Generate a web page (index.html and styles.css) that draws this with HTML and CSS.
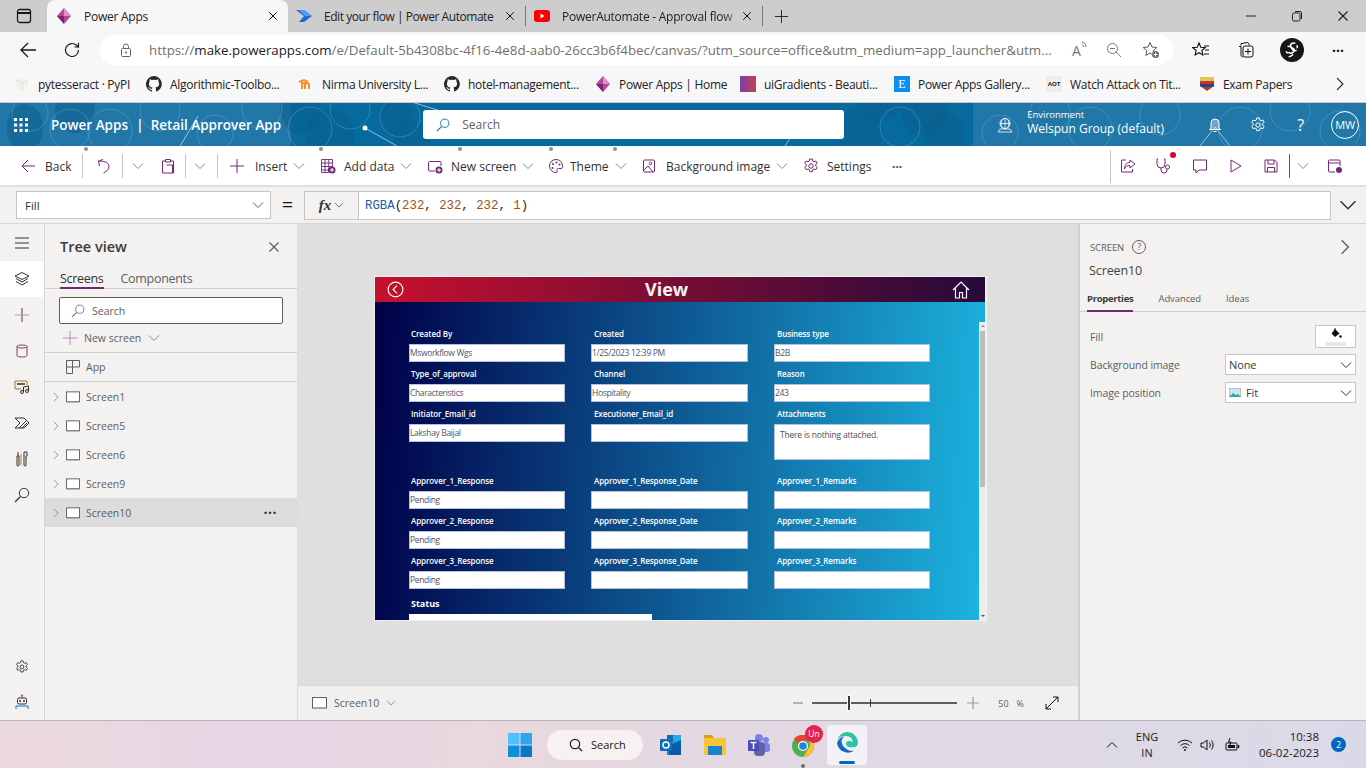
FILE: index.html
```html
<!DOCTYPE html>
<html lang="en">
<head>
<meta charset="utf-8">
<title>Power Apps</title>
<link rel="stylesheet" href="styles.css">
</head>
<body>
<svg class="defs" width="0" height="0" aria-hidden="true">
  <defs>
    <symbol id="chev" viewBox="0 0 12 12"><path d="M1 3.500l5 5 5-5" fill="none" stroke="currentColor" stroke-width="1"/></symbol>
    <symbol id="chevr" viewBox="0 0 12 12"><path d="M3.500 1l5 5-5 5" fill="none" stroke="currentColor" stroke-width="1"/></symbol>
    <symbol id="x" viewBox="0 0 12 12"><path d="M1.500 1.500l9 9M10.500 1.500l-9 9" fill="none" stroke="currentColor" stroke-width="1.200"/></symbol>
    <symbol id="pa" viewBox="0 0 16 16"><path d="M8 0l7 8-7 8-7-8z" fill="#b6479c"/><path d="M8 0l7 8-7 0z" fill="#e58dcb"/><path d="M1 8l7 8V8z" fill="#742774"/></symbol>
    <symbol id="gh" viewBox="0 0 16 16"><path fill="#24292f" d="M8 0a8 8 0 0 0-2.500 15.600c.4.100.5-.2.5-.4v-1.400c-2.200.5-2.700-1-2.700-1-.4-.9-.9-1.200-.9-1.200-.7-.5.100-.5.100-.5.800.1 1.200.8 1.200.8.700 1.200 1.900.9 2.300.7.100-.5.300-.9.500-1.100-1.800-.2-3.600-.9-3.600-4 0-.9.300-1.600.8-2.100-.1-.2-.4-1 .1-2.100 0 0 .7-.2 2.200.8a7.600 7.600 0 0 1 4 0c1.500-1 2.200-.8 2.200-.8.400 1.100.200 1.900.1 2.100.5.600.8 1.300.8 2.100 0 3.100-1.900 3.700-3.700 3.900.3.300.600.800.600 1.500v2.200c0 .2.100.5.600.4A8 8 0 0 0 8 0z"/></symbol>
    <symbol id="gear" viewBox="0 0 16 16"><path d="M6.700 1h2.600l.4 2 1.300.7 1.900-.7 1.300 2.300-1.500 1.300v1.500l1.500 1.300-1.300 2.300-1.900-.7-1.300.7-.4 2H6.700l-.4-2-1.300-.7-1.900.7-1.300-2.300 1.500-1.300V6.600L1.800 5.300 3.100 3l1.900.7 1.300-.7z" fill="none" stroke="currentColor"/><circle cx="8" cy="8" r="2.200" fill="none" stroke="currentColor"/></symbol>
    <symbol id="scr" viewBox="0 0 15 12"><rect x=".5" y=".5" width="14" height="10.500" fill="#fff" stroke="#605e5c"/><path d="M.5 11.500h14" stroke="#a19f9d"/></symbol>
    <symbol id="loupe" viewBox="0 0 16 16"><circle cx="10" cy="6" r="4.700" fill="none" stroke="currentColor"/><path d="M6.500 9.500L1 15" stroke="currentColor" stroke-width="1.200"/></symbol>
    <symbol id="plus" viewBox="0 0 16 16"><path d="M8 1v14M1 8h14" stroke="currentColor" stroke-width="1"/></symbol>
  </defs>
</svg>

<div class="screen">
  <!-- Browser tab strip -->
  <div class="tabs">
    <span class="tab-side"><svg class="i16" viewBox="0 0 16 16"><rect x="1.500" y="1.500" width="13" height="13" rx="2" fill="none" stroke="#1a1a1a" stroke-width="1.300"/><path d="M1.500 5h13" stroke="#1a1a1a" stroke-width="2"/></svg></span>
    <div class="tab tab-on"><svg class="i16"><use href="#pa"/></svg><span class="tab-t">Power Apps</span><svg class="i10"><use href="#x"/></svg></div>
    <div class="tab tab-2"><svg class="i16" viewBox="0 0 16 16"><path d="M0 2h8l8 6-8 6H3l5-6z" fill="#2566d6"/><path d="M3 2h5l8 6H9z" fill="#4aa0f0"/></svg><span class="tab-t">Edit your flow | Power Automate</span><svg class="i10"><use href="#x"/></svg></div>
    <i class="tab-sep"></i>
    <div class="tab tab-3"><svg class="i16" viewBox="0 0 16 16"><rect y="2" width="16" height="12" rx="3" fill="#f00"/><path d="M6.500 5.500v5l4-2.500z" fill="#fff"/></svg><span class="tab-t fade">PowerAutomate - Approval flow</span><svg class="i10"><use href="#x"/></svg></div>
    <i class="tab-sep"></i>
    <svg class="new-tab"><use href="#plus"/></svg>
    <div class="win">
      <svg class="i12" viewBox="0 0 12 12"><path d="M1 6h10" stroke="#222"/></svg>
      <svg class="i12" viewBox="0 0 12 12"><rect x="1.500" y="3" width="7.500" height="8" rx="1.500" fill="none" stroke="#222"/><path d="M4 1.500h5A1.500 1.500 0 0 1 10.500 3v6" fill="none" stroke="#222"/></svg>
      <svg class="i12"><use href="#x"/></svg>
    </div>
  </div>

  <!-- Address bar -->
  <div class="addr">
    <svg class="addr-back" viewBox="0 0 18 18"><path d="M17 9H2M9 2L2 9l7 7" fill="none" stroke="#1a1a1a" stroke-width="1.300"/></svg>
    <svg class="addr-re" viewBox="0 0 18 18"><path d="M15.500 9a6.500 6.500 0 1 1-2-4.700L15.500 6V1.800M15.500 6h-4" fill="none" stroke="#1a1a1a" stroke-width="1.200"/></svg>
    <div class="url">
      <svg class="i14 lock" viewBox="0 0 14 14"><rect x="2.500" y="5.500" width="9" height="8" rx="1" fill="none" stroke="#666"/><path d="M4.500 5.500V3.500a2.500 2.500 0 0 1 5 0v2" fill="none" stroke="#666"/><circle cx="7" cy="9.500" r="1" fill="#666"/></svg>
      <span class="url-t"><span class="dim">https://</span>make.powerapps.com<span class="dim">/e/Default-5b4308bc-4f16-4e8d-aab0-26cc3b6f4bec/canvas/?utm_source=office&amp;utm_medium=app_launcher&amp;utm...</span></span>
      <span class="url-a">A<svg class="i8" viewBox="0 0 8 8"><path d="M1 1a5 5 0 0 1 4 5M1 3.500a3 3 0 0 1 2 2.500" fill="none" stroke="#777"/></svg></span>
      <svg class="i16 url-z" viewBox="0 0 16 16"><circle cx="6.500" cy="6.500" r="5" fill="none" stroke="#777"/><path d="M10 10l5 5M4 6.500h5" stroke="#777"/></svg>
      <svg class="i18 url-s" viewBox="0 0 18 18"><path d="M8 1.500l2 4.500 4.800.5-3.600 3.200 1 4.800L8 12l-4.200 2.500 1-4.800L1.200 6.500 6 6z" fill="none" stroke="#555"/><circle cx="13.500" cy="13.500" r="3.500" fill="#6b6b6b"/><path d="M13.500 11.500v4M11.500 13.500h4" stroke="#fff"/></svg>
    </div>
    <svg class="i18 ad-a" viewBox="0 0 18 18"><path d="M7 2l1.800 4.200 4.400.4-3.300 2.900 1 4.500L7 11.700l-3.900 2.300 1-4.500L.8 6.600l4.400-.4z" fill="none" stroke="#111" stroke-width="1.100"/><path d="M12 5h5M13 9h4M12 13h5" stroke="#111"/></svg>
    <svg class="i18 ad-b" viewBox="0 0 18 18"><path d="M4 4.500V2.700L10 1.500c1.500 0 2 1 2 2v1M2 5.500h2v8.500c0 1 1 2 2 2" fill="none" stroke="#111"/><rect x="6" y="5" width="10" height="11" rx="2" fill="none" stroke="#111"/><path d="M11 7.500v6M8 10.500h6" stroke="#111"/></svg>
    <span class="avatar"><svg class="i18" viewBox="0 0 16 16"><path d="M11 2C8 1 6 3 7 5s3 1 3 3-3 4-5 2M4 5c2-1 3 0 4 2s3 2 4 1M5 14c2 0 3-1 4-2M12 6c1 0 1-2 0-2M3 9c0 1 1 2 2 1" fill="none" stroke="#fff" stroke-width="1.400"/></svg></span>
    <span class="ad-more">···</span>
  </div>

  <!-- Favourites -->
  <div class="favs">
    <div class="fav"><svg class="i16" viewBox="0 0 16 16"><path d="M8 1l6 3v8l-6 3-6-3V4z" fill="#f3f1ea"/><path d="M2 4l6 3 6-3M8 7v8" stroke="#e3e1da" fill="none"/></svg><span>pytesseract · PyPI</span></div>
    <div class="fav"><svg class="i16"><use href="#gh"/></svg><span>Algorithmic-Toolbo...</span></div>
    <div class="fav"><svg class="i16" viewBox="0 0 16 16"><path d="M4 13V7l3 0v6M7 8c0-1 4-1 4 0v5M1 6l5-2 4 2" fill="none" stroke="#f39325" stroke-width="2"/></svg><span>Nirma University L...</span></div>
    <div class="fav"><svg class="i16"><use href="#gh"/></svg><span>hotel-management...</span></div>
    <div class="fav"><svg class="i16"><use href="#pa"/></svg><span>Power Apps | Home</span></div>
    <div class="fav"><span class="ug"></span><span>uiGradients - Beauti...</span></div>
    <div class="fav"><span class="gal">E</span><span>Power Apps Gallery...</span></div>
    <div class="fav"><span class="aot">AOT</span><span>Watch Attack on Tit...</span></div>
    <div class="fav"><svg class="i16" viewBox="0 0 16 16"><path d="M1 1h14v9l-7 5-7-5z" fill="#c0392b"/><path d="M1 1h14v4H1z" fill="#e8c34a"/><path d="M1 8h14v2l-1 1H2l-1-1z" fill="#2a3f8f"/></svg><span>Exam Papers</span></div>
    <svg class="fav-more"><use href="#chevr"/></svg>
  </div>

  <!-- Power Apps header -->
  <header class="pa-head">
    <svg class="pa-art" viewBox="0 0 1366 43" preserveAspectRatio="none" aria-hidden="true">
      <g fill="#0a5d8c" fill-opacity=".5">
        <ellipse cx="25" cy="25" rx="18" ry="24"/><ellipse cx="75" cy="8" rx="20" ry="22"/><ellipse cx="300" cy="5" rx="20" ry="26"/><ellipse cx="330" cy="32" rx="24" ry="26"/><ellipse cx="395" cy="10" rx="16" ry="24"/><ellipse cx="412" cy="38" rx="18" ry="20"/>
        <ellipse cx="860" cy="32" rx="22" ry="28"/><ellipse cx="925" cy="8" rx="24" ry="26"/><ellipse cx="880" cy="-2" rx="24" ry="20"/><ellipse cx="945" cy="34" rx="20" ry="24"/>
      </g>
      <g fill="none" stroke="#6fb2d3" stroke-opacity=".4">
        <circle cx="30" cy="10" r="18"/><circle cx="70" cy="26" r="20"/><circle cx="110" cy="28" r="22"/><circle cx="160" cy="8" r="20"/><circle cx="215" cy="30" r="18"/><circle cx="262" cy="6" r="20"/><circle cx="310" cy="26" r="22"/><circle cx="350" cy="6" r="20"/><circle cx="400" cy="14" r="20"/>
        <circle cx="900" cy="24" r="20"/><circle cx="1000" cy="30" r="18"/><circle cx="1050" cy="10" r="20"/><circle cx="1090" cy="26" r="22"/><circle cx="1160" cy="12" r="20"/><circle cx="1240" cy="26" r="22"/><circle cx="1290" cy="8" r="20"/><circle cx="1340" cy="28" r="20"/>
      </g>
      <path d="M365 25l32 18M415 0l32 10M1200 43l15-19 15 19M785 43l8-12M180 43l18-30" fill="none" stroke="#cfe3ee" stroke-opacity=".7"/>
      <circle cx="365" cy="25" r="2.500" fill="#fff"/><circle cx="793" cy="31" r="2" fill="#dfeef6"/>
    </svg>
    <svg class="waffle" viewBox="0 0 14 14"><g fill="#fff"><rect width="3" height="3"/><rect x="5.500" width="3" height="3"/><rect x="11" width="3" height="3"/><rect y="5.500" width="3" height="3"/><rect x="5.500" y="5.500" width="3" height="3"/><rect x="11" y="5.500" width="3" height="3"/><rect y="11" width="3" height="3"/><rect x="5.500" y="11" width="3" height="3"/><rect x="11" y="11" width="3" height="3"/></g></svg>
    <span class="brand">Power Apps</span><span class="brand-sep">|</span><span class="brand">Retail Approver App</span>
    <div class="head-search"><svg class="i14 loupe-b"><use href="#loupe"/></svg><span>Search</span></div>
    <svg class="i16 env-i" viewBox="0 0 16 16"><circle cx="8" cy="6.500" r="5" fill="none" stroke="#fff"/><path d="M3 6.500h10M8 1.500v10M5 2.500c-1 3-1 5 0 8M11 2.500c1 3 1 5 0 8M1 15l2-3h10l2 3z" fill="none" stroke="#fff" stroke-width=".8"/></svg>
    <div class="env"><small>Environment</small><b>Welspun Group (default)</b></div>
    <svg class="i16 hd-bell" viewBox="0 0 16 16"><path d="M4 11V6a4 4 0 0 1 8 0v5l1.500 1.500h-11zM6.500 14.500h3" fill="#fff" fill-opacity=".35" stroke="#fff"/></svg>
    <svg class="i16 hd-gear"><use href="#gear"/></svg>
    <span class="hd-q">?</span>
    <span class="mw">MW</span>
  </header>

  <!-- Command bar -->
  <nav class="cmd">
    <svg class="cmd-dots" viewBox="0 0 640 4" aria-hidden="true"><g fill="#8f8f8f"><circle cx="86" cy="2" r="2"/><circle cx="321" cy="2" r="2"/><circle cx="460" cy="2" r="2"/><circle cx="551" cy="2" r="2"/><circle cx="615" cy="2" r="2"/></g></svg>
    <div class="c"><svg class="i14" viewBox="0 0 14 14"><path d="M14 7H1M7 1L1 7l6 6" fill="none" stroke="currentColor"/></svg><span class="c-back">Back</span></div>
    <i class="c-sep"></i>
    <div class="c"><svg class="i16" viewBox="0 0 16 16"><path d="M7 1.500L2.500 3l1 5M2.500 3C6 3 13 3.500 13 8.500c0 3.500-3 5-5.500 6.500" fill="none" stroke="currentColor"/></svg></div>
    <i class="c-sep"></i>
    <div class="c c-g"><svg class="i12"><use href="#chev"/></svg></div>
    <div class="c"><svg class="i16" viewBox="0 0 16 16"><path d="M5 3H2.500v12h11V3H11M5.500 1.500h5V4h-5zM6.500 7h6v8" fill="none" stroke="currentColor"/></svg></div>
    <i class="c-sep"></i>
    <div class="c c-g"><svg class="i12"><use href="#chev"/></svg></div>
    <i class="c-sep"></i>
    <div class="c"><svg class="i16"><use href="#plus"/></svg><span class="ct ct-i">Insert</span><svg class="i12 c-g"><use href="#chev"/></svg></div>
    <div class="c"><svg class="i16" viewBox="0 0 16 16"><path d="M1.500 1.500h11v9h-4v4h-7zM1.500 5h11M1.500 8.500h11M1.500 12h7M5 1.500v13M8.800 1.500v13" fill="none" stroke="currentColor" stroke-width=".9"/><circle cx="12" cy="12" r="3.500" fill="currentColor"/><path d="M12 10v4M10 12h4" stroke="#fff"/></svg><span class="ct ct-a">Add data</span><svg class="i12 c-g"><use href="#chev"/></svg></div>
    <div class="c"><svg class="i16" viewBox="0 0 16 16"><path d="M8 13H2.500a1 1 0 0 1-1-1V4.500a1 1 0 0 1 1-1H13a1 1 0 0 1 1 1V8" fill="none" stroke="currentColor"/><circle cx="12" cy="12" r="3.500" fill="currentColor"/><path d="M12 10v4M10 12h4" stroke="#fff"/></svg><span class="ct ct-n">New screen</span><svg class="i12 c-g"><use href="#chev"/></svg></div>
    <div class="c"><svg class="i16" viewBox="0 0 16 16"><path d="M8 1.500a6.500 6.500 0 1 0 0 13c1.500 0 1.500-1 1-2s0-2 1.500-2H13c1.500 0 2-1 1.500-3A6.500 6.500 0 0 0 8 1.500z" fill="none" stroke="currentColor"/><circle cx="5" cy="6" r="1" fill="currentColor"/><circle cx="8.500" cy="4.500" r="1" fill="currentColor"/><circle cx="4.500" cy="10" r="1" fill="currentColor"/><circle cx="11.500" cy="6.500" r="1" fill="currentColor"/></svg><span class="ct ct-t">Theme</span><svg class="i12 c-g"><use href="#chev"/></svg></div>
    <div class="c"><svg class="i14" viewBox="0 0 14 14"><rect x="1.500" y="1" width="11" height="12" rx="1" fill="none" stroke="currentColor"/><circle cx="8.500" cy="4.500" r="1.200" fill="none" stroke="currentColor"/><path d="M2 11l4-4 5 6" fill="none" stroke="currentColor"/></svg><span class="ct ct-b">Background image</span><svg class="i12 c-g"><use href="#chev"/></svg></div>
    <div class="c"><svg class="i16"><use href="#gear"/></svg><span class="ct ct-s">Settings</span></div>
    <div class="c c-more">···</div>
    <i class="c-sep c-sep-t"></i>
    <div class="c"><svg class="i16" viewBox="0 0 16 16"><path d="M6 2H1.500v12h11v-3" fill="none" stroke="currentColor"/><path d="M10 2l5 4-5 4V7.500C7 7.500 5 9 4.500 11c0-4 2-6.500 5.500-6.500z" fill="none" stroke="currentColor"/></svg></div>
    <div class="c c-st"><svg class="i18" viewBox="0 0 18 18"><path d="M3 2H2v5a4 4 0 0 0 8 0V2H9M6 11v2a3 3 0 0 0 6 0v-1" fill="none" stroke="currentColor"/><circle cx="12.500" cy="10" r="2" fill="none" stroke="currentColor"/></svg><i class="dot"></i></div>
    <div class="c"><svg class="i16" viewBox="0 0 16 16"><path d="M1.500 2h13v10H7l-3 3v-3H1.500z" fill="none" stroke="currentColor"/></svg></div>
    <div class="c"><svg class="i14" viewBox="0 0 14 14"><path d="M2 1l10 6-10 6z" fill="none" stroke="currentColor"/></svg></div>
    <div class="c"><svg class="i14" viewBox="0 0 14 14"><path d="M1 1h9.500L13 3.500V13H1zM4 1v4h6V1M3.500 13V8.500h7V13" fill="none" stroke="currentColor"/></svg></div>
    <i class="c-sep c-sep-d"></i>
    <div class="c c-g"><svg class="i12"><use href="#chev"/></svg></div>
    <div class="c"><svg class="i16" viewBox="0 0 16 16"><path d="M8 14H2.500a1 1 0 0 1-1-1V3a1 1 0 0 1 1-1H12a1 1 0 0 1 1 1v5M1.500 5H13" fill="none" stroke="currentColor"/><circle cx="12" cy="12" r="3" fill="currentColor"/></svg></div>
  </nav>

  <!-- Formula bar -->
  <div class="fx-bar">
    <div class="prop">Fill<svg class="i12"><use href="#chev"/></svg></div>
    <span class="eq">=</span>
    <div class="fx-btn"><i>fx</i><svg class="i10"><use href="#chev"/></svg></div>
    <div class="fx-in"><span class="k">RGBA</span>(<span class="n">232</span>, <span class="n">232</span>, <span class="n">232</span>, <span class="n">1</span>)</div>
    <svg class="fx-exp"><use href="#chev"/></svg>
  </div>

  <!-- Studio -->
  <div class="studio">
    <aside class="rail">
      <svg class="i16 r-i r-h" viewBox="0 0 16 16"><path d="M1 3h14M1 8h14M1 13h14" stroke="#323130"/></svg>
      <div class="r-on"><svg class="i16" viewBox="0 0 16 16"><path d="M8 1.500L15 5 8 8.500 1 5zM2 7.500L8 11l6-3.500M2 10.500L8 14l6-3.500" fill="none" stroke="#323130"/></svg></div>
      <svg class="i16 r-i r-p" viewBox="0 0 16 16"><path d="M8 1v14" stroke="#742774"/><path d="M1 8h14" stroke="#a19f9d"/></svg>
      <svg class="i16 r-i r-d" viewBox="0 0 16 16"><path d="M3 3.500C3 1.500 13 1.500 13 3.500v9c0 2-10 2-10 0zM3 3.500c0 2 10 2 10 0" fill="none" stroke="#8a3a6a"/></svg>
      <svg class="i16 r-i" viewBox="0 0 16 16"><path d="M7 10H1V2h12v4" fill="none" stroke="#b4731f"/><path d="M3 4h8v2H3z" fill="#605e5c"/><circle cx="8" cy="13" r="1.500" fill="none" stroke="#323130"/><circle cx="13" cy="12" r="1.500" fill="none" stroke="#323130"/><path d="M9.500 13V8l5-1v5" fill="none" stroke="#323130"/></svg>
      <svg class="i16 r-i" viewBox="0 0 16 16"><path d="M1 3h9l5 5-5 5H1l5-5zM5 13l7-7M8 13l5-5" fill="none" stroke="#323130"/></svg>
      <svg class="i16 r-i" viewBox="0 0 16 16"><path d="M4 1v4M3 5h2v9a1 1 0 0 1-2 0zM10 1h3v4h-1v9a1 1 0 0 1-2 0V5z" fill="none" stroke="#323130"/><path d="M7 3v11" stroke="#c97a1a"/></svg>
      <svg class="i16 r-i r-s"><use href="#loupe"/></svg>
      <span class="r-fill"></span>
      <svg class="i14 r-g"><use href="#gear"/></svg>
      <svg class="i16 r-b" viewBox="0 0 16 16"><rect x="3.500" y="4" width="9" height="6" rx="1.500" fill="none" stroke="#323130"/><path d="M8 1.500V4M2 15v-3h12v3" fill="none" stroke="#0078d4"/><circle cx="6" cy="7" r="1" fill="#323130"/><circle cx="10" cy="7" r="1" fill="#323130"/><circle cx="8" cy="1.500" r="1" fill="#d13438"/></svg>
    </aside>

    <section class="tree">
      <div class="tree-top"><h2>Tree view</h2><svg class="i12"><use href="#x"/></svg></div>
      <div class="tree-tabs"><span class="on">Screens</span><span>Components</span></div>
      <div class="tree-search"><svg class="i14"><use href="#loupe"/></svg><span>Search</span></div>
      <div class="tree-new"><svg class="i16"><use href="#plus"/></svg><span>New screen</span><svg class="i12"><use href="#chev"/></svg></div>
      <div class="tree-app"><svg class="i14" viewBox="0 0 14 14"><path d="M.5.500h13v6.500h-7v6.500h-6zM6.500.500V7H.5" fill="none" stroke="#605e5c"/></svg><span>App</span></div>
      <div class="row"><svg class="i10 rc"><use href="#chevr"/></svg><svg class="scr"><use href="#scr"/></svg><span>Screen1</span></div>
      <div class="row"><svg class="i10 rc"><use href="#chevr"/></svg><svg class="scr"><use href="#scr"/></svg><span>Screen5</span></div>
      <div class="row"><svg class="i10 rc"><use href="#chevr"/></svg><svg class="scr"><use href="#scr"/></svg><span>Screen6</span></div>
      <div class="row"><svg class="i10 rc"><use href="#chevr"/></svg><svg class="scr"><use href="#scr"/></svg><span>Screen9</span></div>
      <div class="row row-on"><svg class="i10 rc"><use href="#chevr"/></svg><svg class="scr"><use href="#scr"/></svg><span>Screen10</span><em>···</em></div>
    </section>

    <main class="stage">
      <div class="stage-area">
        <div class="canvas">
          <div class="app-head">
            <svg class="back-i" viewBox="0 0 18 18"><circle cx="9" cy="9" r="7.800" fill="none" stroke="#fff" stroke-width="1.200"/><path d="M10.500 5L6.500 9l4 4" fill="none" stroke="#fff" stroke-width="1.200"/></svg>
            <span class="app-title">View</span>
            <svg class="home-i" viewBox="0 0 18 18"><path d="M1 9l8-8 8 8M3.500 7.500V17h4v-5.500h3V17h4V7.500" fill="none" stroke="#fff" stroke-width="1.200"/></svg>
          </div>
          <div class="app-body">
            <div class="form">
              <div class="f"><label>Created By</label><div class="in">Msworkflow Wgs</div></div>
              <div class="f"><label>Created</label><div class="in">1/25/2023 12:39 PM</div></div>
              <div class="f"><label>Business type</label><div class="in">B2B</div></div>
              <div class="f"><label>Type_of_approval</label><div class="in">Characteristics</div></div>
              <div class="f"><label>Channel</label><div class="in">Hospitality</div></div>
              <div class="f"><label>Reason</label><div class="in">243</div></div>
              <div class="f"><label>Initiator_Email_id</label><div class="in">Lakshay Baijal</div></div>
              <div class="f"><label>Executioner_Email_id</label><div class="in"></div></div>
              <div class="f"><label>Attachments</label><div class="in in-att">There is nothing attached.</div></div>
            </div>
            <div class="form">
              <div class="f"><label>Approver_1_Response</label><div class="in">Pending</div></div>
              <div class="f"><label>Approver_1_Response_Date</label><div class="in"></div></div>
              <div class="f"><label>Approver_1_Remarks</label><div class="in"></div></div>
              <div class="f"><label>Approver_2_Response</label><div class="in">Pending</div></div>
              <div class="f"><label>Approver_2_Response_Date</label><div class="in"></div></div>
              <div class="f"><label>Approver_2_Remarks</label><div class="in"></div></div>
              <div class="f"><label>Approver_3_Response</label><div class="in">Pending</div></div>
              <div class="f"><label>Approver_3_Response_Date</label><div class="in"></div></div>
              <div class="f"><label>Approver_3_Remarks</label><div class="in"></div></div>
            </div>
            <div class="status-t">Status</div>
            <div class="status-b"></div>
            <div class="sbar"><span class="sb-up"></span><span class="sb-th"></span><span class="sb-dn"></span></div>
          </div>
        </div>
      </div>
      <div class="stage-foot">
        <svg class="scr"><use href="#scr"/></svg><span class="sf-n">Screen10</span><svg class="i10 sf-c"><use href="#chev"/></svg>
        <span class="sf-fill"></span>
        <svg class="i10 sf-m" viewBox="0 0 10 10"><path d="M0 5h10" stroke="#a19f9d" stroke-width="1.500"/></svg>
        <div class="slider"><i class="thumb"></i><i class="tick"></i></div>
        <svg class="i12 sf-p" viewBox="0 0 12 12"><path d="M6 0v12" stroke="#8a8a5a"/><path d="M0 6h12" stroke="#a19f9d"/></svg>
        <span class="sf-z">50</span><span class="sf-pc">%</span>
        <svg class="i14 sf-e" viewBox="0 0 14 14"><path d="M13 1L1 13M8 1h5v5M1 8v5h5" fill="none" stroke="#111"/></svg>
      </div>
    </main>

    <aside class="props">
      <div class="p-top"><span class="p-cap">SCREEN</span><span class="p-help">?</span><svg class="p-arrow"><use href="#chevr"/></svg></div>
      <div class="p-name">Screen10</div>
      <div class="p-tabs"><span class="on">Properties</span><span>Advanced</span><span>Ideas</span></div>
      <div class="p-row p-row-fill"><span>Fill</span><div class="p-fill"><svg class="i12" viewBox="0 0 12 12"><path d="M5 1l4.500 4.500L5 9 1.500 5.500z" fill="#111"/><path d="M5 0v3" stroke="#111"/><circle cx="10.500" cy="8.500" r="1.300" fill="#111"/></svg><i></i></div></div>
      <div class="p-row p-row-bg"><span>Background image</span><div class="p-sel">None<svg class="i12"><use href="#chev"/></svg></div></div>
      <div class="p-row"><span>Image position</span><div class="p-sel"><svg class="pic" viewBox="0 0 12 9"><rect width="12" height="9" fill="#cfe5ef" stroke="#777" stroke-width=".6"/><path d="M0 9l4-4 3 2 2-1 3 3z" fill="#39a6a6"/></svg>Fit<svg class="i12"><use href="#chev"/></svg></div></div>
    </aside>
  </div>

  <!-- Windows taskbar -->
  <footer class="task">
    <svg class="t-win" viewBox="0 0 24 24"><path d="M0 0h11.500v11.500H0z" fill="#4cc2ff"/><path d="M12.500 0H24v11.500H12.500z" fill="#2aa7ee"/><path d="M0 12.500h11.500V24H0z" fill="#0f8fe0"/><path d="M12.500 12.500H24V24H12.500z" fill="#0a78c8"/></svg>
    <div class="t-search"><svg class="i14" viewBox="0 0 14 14"><circle cx="6" cy="6" r="4.700" fill="none" stroke="#222" stroke-width="1.200"/><path d="M9.500 9.500L13 13" stroke="#222" stroke-width="1.200"/></svg><span>Search</span></div>
    <div class="t-app"><svg class="i24" viewBox="0 0 24 24"><path d="M8 2h14v20H8z" fill="#1a8ad4"/><path d="M14 2h8v7h-8z" fill="#28a8ea"/><path d="M8 2h6v7H8z" fill="#0f6cbd"/><path d="M10 13l12-6v15H10z" fill="#0a5ca8"/><rect x="1" y="6" width="12" height="12" rx="1" fill="#0f6cbd"/><circle cx="7" cy="12" r="3" fill="none" stroke="#fff" stroke-width="1.500"/></svg></div>
    <div class="t-app"><svg class="i24" viewBox="0 0 24 24"><path d="M1 2h8l2 3h12v17H1z" fill="#f5c63c"/><path d="M1 2h8l2 3H1z" fill="#d9a21c"/><path d="M5 13h14v9H5z" fill="#1583d1"/></svg></div>
    <div class="t-app"><svg class="i24" viewBox="0 0 24 24"><circle cx="19" cy="7" r="3" fill="#7b83eb"/><circle cx="12" cy="5" r="4" fill="#7b83eb"/><rect x="15" y="10" width="8" height="9" rx="3" fill="#7b83eb"/><rect x="7" y="9" width="11" height="14" rx="4" fill="#6264a7"/><rect x="1" y="7" width="11" height="11" rx="1" fill="#464eb8"/><path d="M3.500 9.500h6M6.500 9.500V16" stroke="#fff" stroke-width="1.500"/></svg></div>
    <div class="t-app t-chrome"><svg class="i24" viewBox="0 0 24 24"><circle cx="12" cy="13" r="11" fill="#4caf50"/><path d="M12 2a11 11 0 0 1 9.500 5.500H12a5.500 5.500 0 0 0-5 3L3 5.500A11 11 0 0 1 12 2z" fill="#ea4335"/><path d="M21.500 7.500A11 11 0 0 1 12 24l5-8a5.500 5.500 0 0 0 0-8.500z" fill="#fbc02d"/><circle cx="12" cy="13" r="5" fill="#fff"/><circle cx="12" cy="13" r="3.800" fill="#2b7de9"/></svg><b>Un</b><i class="t-run"></i></div>
    <div class="t-app t-edge"><svg class="i24" viewBox="0 0 24 24"><path d="M12 1a11 11 0 0 1 11 11c0 3-3 5-6 4-3 1-6-1-6-3 0-4 6-4 6-1 2-4-2-7-6-7A9 9 0 0 0 2.500 9 11 11 0 0 1 12 1z" fill="#2fc2a5"/><path d="M2 12A10 10 0 0 1 12 5c-6 0-7 7-3 11s8 5 11 3a11 11 0 0 1-18-7z" fill="#0f6cbd"/></svg><i class="t-act"></i></div>
    <svg class="i12 t-up" viewBox="0 0 12 12"><path d="M1 8.500l5-5 5 5" fill="none" stroke="#111"/></svg>
    <div class="t-lang"><span>ENG</span><span>IN</span></div>
    <svg class="i16 t-wifi" viewBox="0 0 16 16"><path d="M1 6a10 10 0 0 1 14 0M3.500 8.500a6.500 6.500 0 0 1 9 0M5.500 11a3.500 3.500 0 0 1 5 0" fill="none" stroke="#111"/><circle cx="8" cy="13" r="1" fill="#111"/></svg>
    <svg class="i16 t-vol" viewBox="0 0 16 16"><path d="M2 6h2.500L8 3v10L4.500 10H2zM10.500 5.500a4 4 0 0 1 0 5M12.500 3.500a7 7 0 0 1 0 9" fill="none" stroke="#111"/></svg>
    <svg class="i16 t-bat" viewBox="0 0 16 16"><rect x="2" y="6" width="11" height="7" rx="1" fill="none" stroke="#111"/><rect x="4" y="8" width="7" height="3" fill="#111"/><path d="M14.500 8v3" stroke="#111" stroke-width="1.500"/><path d="M6 1L4.500 5H7L6 8" fill="none" stroke="#111"/></svg>
    <div class="t-clock"><span>10:38</span><span>06-02-2023</span></div>
    <span class="t-badge">2</span>
  </footer>
</div>
</body>
</html>
```

FILE: styles.css
```css
* { box-sizing: border-box; }
html, body { margin: 0; padding: 0; }
body { font-family: "Open Sans", "Noto Sans", sans-serif; color: #323130; overflow: hidden; }
svg { display: block; flex: none; }
i, em { font-style: normal; }
.defs { position: absolute; }
.i8 { width: 8px; height: 8px; }
.i10 { width: 10px; height: 10px; }
.i12 { width: 12px; height: 12px; }
.i14 { width: 14px; height: 14px; }
.i16 { width: 16px; height: 16px; }
.i18 { width: 18px; height: 18px; }
.i24 { width: 24px; height: 24px; }
.screen { width: 1366px; height: 768px; display: flex; flex-direction: column; overflow: hidden; }

/* browser tabs */
.tabs { height: 32px; background: #cdcdcd; display: flex; align-items: flex-end; font-size: 12px; letter-spacing: -.25px; color: #222; }
.tab-side { width: 47px; height: 32px; padding: 8px 0 0 16px; }
.tab { height: 32px; display: flex; align-items: center; padding-left: 9px; }
.tab-on { width: 241px; background: #f7f7f7; border-radius: 8px 8px 0 0; }
.tab-2 { width: 237px; padding-left: 8px; }
.tab-2 .tab-t { letter-spacing: -.45px; }
.tab-3 { width: 236px; padding-left: 8px; }
.tab-t { flex: 1; padding-left: 12px; white-space: nowrap; overflow: hidden; }
.tab .i10 { margin-right: 10px; color: #111; }
.fade { -webkit-mask-image: linear-gradient(90deg, #000 90%, transparent); mask-image: linear-gradient(90deg, #000 90%, transparent); }
.tab-sep { width: 1px; height: 20px; background: #777; align-self: center; }
.new-tab { width: 15px; height: 15px; margin: 9px 0 8px 11px; color: #222; }
.win { margin-left: auto; display: flex; gap: 34px; padding: 10px 17px 0 0; height: 32px; width: 149px; color: #222; justify-content: flex-end; }

/* address */
.addr { height: 36px; background: #f7f7f7; display: flex; align-items: center; }
.addr-back { width: 18px; height: 18px; margin-left: 19px; }
.addr-re { width: 18px; height: 18px; margin-left: 26px; }
.url { margin-left: 19px; width: 1073px; height: 30px; border-radius: 15px; background: #fff; display: flex; align-items: center; font-size: 13.300px; color: #222; }
.lock { margin-left: 19px; }
.url-t { margin-left: 16px; width: 912px; white-space: nowrap; }
.dim { color: #707070; }
.url-a { margin-left: 11px; width: 20px; display: flex; align-items: flex-start; color: #777; font-size: 14px; }
.url-z { margin-left: 14px; }
.url-s { margin-left: 20px; }
.ad-a { margin-left: 19px; }
.ad-b { margin-left: 27px; }
.avatar { width: 24px; height: 24px; margin-left: 25px; border-radius: 50%; background: #161616; display: flex; align-items: center; justify-content: center; }
.ad-more { margin-left: 28px; font-size: 14px; font-weight: 700; color: #111; }

/* favourites */
.favs { height: 35px; background: #f7f7f7; border-bottom: 1px solid #c8c8c8; display: grid; grid-template-columns: 132px 152px 146px 151px 145px 154px 152px 153px 141px 1fr; padding: 0 0 2px 14px; align-items: center; font-size: 12px; letter-spacing: -.3px; color: #222; }
.fav { display: flex; align-items: center; gap: 8px; white-space: nowrap; overflow: hidden; }
.ug { width: 16px; height: 16px; background: linear-gradient(90deg, #7a3fa8, #c4434c); }
.gal { width: 16px; height: 16px; background: #0a8ff0; color: #fff; font: 12px/16px "Liberation Serif", serif; text-align: center; letter-spacing: 0; }
.aot { width: 16px; height: 16px; font: 700 6px/16px "Liberation Sans", sans-serif; letter-spacing: 0; color: #111; background: #eee; text-align: center; }
.fav-more { width: 14px; height: 14px; margin-left: -7px; color: #222; }

/* header */
.pa-head { position: relative; height: 43px; background: linear-gradient(90deg, #2077a8 0, #2077a8 291px, #066a9e 291px, #066a9e 973px, #2077a8 973px); display: flex; align-items: center; color: #fff; overflow: hidden; }
.pa-art { position: absolute; inset: 0; width: 100%; height: 100%; }
.pa-head > *:not(.pa-art) { position: relative; }
.waffle { width: 14px; height: 14px; margin-left: 14px; }
.brand { font-size: 13.500px; font-weight: 600; white-space: nowrap; }
.waffle + .brand { margin-left: 23px; }
.brand-sep { margin: 0 7px 0 8px; font-size: 14px; font-weight: 600; }
.head-search { margin-left: 142px; width: 421px; height: 29px; border-radius: 3px; background: #fff; display: flex; align-items: center; color: #605e5c; font-size: 12px; }
.loupe-b { margin-left: 13px; margin-right: 12px; color: #0a6ea8; }
.env-i { margin-left: 153px; }
.env { margin: -6px 0 0 14px; width: 180px; display: flex; flex-direction: column; line-height: 13px; }
.env small { font-size: 9.500px; }
.env b { font-size: 12px; font-weight: 400; white-space: nowrap; margin-top: 1px; }
.hd-gear { margin-left: 27px; color: #fff; }
.hd-q { margin-left: 31px; font-size: 16px; width: 10px; }
.mw { margin-left: 24px; width: 28px; height: 28px; border: 1px solid #fff; border-radius: 50%; font-size: 11px; line-height: 26px; text-align: center; }

/* command bar */
.cmd { position: relative; height: 41px; background: #fff; border-bottom: 2px solid #e1dfdd; padding: 1px 0 0 21px; display: grid; grid-template-columns: 61px 14px 26px 10px 28px 25px 9px 23px 12px 91px 107px 121px 94px 161px 88px 219px 10px 35px 37px 37px 35px 25px 8px 30px 1fr; align-items: center; color: #742774; font-size: 12px; }
.cmd-dots { position: absolute; left: 0; top: 1px; width: 640px; height: 4px; }
.c { display: flex; align-items: center; position: relative; }
.c-g { color: #8a8886; }
.c-sep { width: 1px; height: 24px; background: #c8c6c4; }
.c-sep-t { height: 33px; }
.c-sep-d { background: #605e5c; }
.c-back { margin-left: 10px; color: #323130; }
.ct { color: #323130; white-space: nowrap; }
.ct-i { margin-left: 10px; }
.ct-a, .ct-n { margin-left: 8px; }
.ct-t { margin-left: 6px; }
.ct-b { margin-left: 10px; }
.ct-s { margin-left: 8px; }
.c .ct + .c-g { margin-left: 6px; }
.c-more { color: #742774; font-weight: 700; padding-left: 1px; }
.c-st .dot { position: absolute; left: 15px; top: -5px; width: 6px; height: 6px; border-radius: 50%; background: #e3002b; }

/* formula */
.fx-bar { height: 37px; background: #f3f2f1; border-bottom: 1px solid #d8d6d4; display: flex; align-items: center; padding-left: 16px; }
.prop { width: 255px; height: 28px; background: #fff; border: 1px solid #c8c6c4; display: flex; align-items: center; justify-content: space-between; padding: 0 6px 0 8px; font-size: 11.500px; color: #323130; }
.prop svg { color: #605e5c; }
.eq { width: 33px; text-align: center; font-size: 20px; line-height: 20px; color: #111; }
.fx-btn { width: 55px; height: 29px; background: #f3f2f1; border: 1px solid #c8c6c4; display: flex; align-items: center; justify-content: center; gap: 3px; }
.fx-btn i { font: italic 700 15px/1 "Liberation Serif", serif; color: #323130; }
.fx-btn svg { color: #605e5c; }
.fx-in { width: 972px; height: 29px; background: #fff; border: 1px solid #c8c6c4; border-left: 0; padding-left: 6px; font: 12.350px/28px "Liberation Mono", monospace; color: #222; }
.k { color: #1c5aa8; }
.n { color: #a0500f; }
.fx-exp { width: 18px; height: 18px; margin-left: 8px; color: #323130; }

/* studio */
.studio { flex: 1; min-height: 0; display: flex; background: #f3f2f1; }
.rail { width: 45px; border-right: 1px solid #d8d6d4; display: flex; flex-direction: column; align-items: center; padding-top: 11px; }
.r-i { margin-bottom: 20px; }
.r-h { margin-bottom: 10px; }
.r-on { width: 44px; height: 36px; margin-bottom: 10px; background: #fff; border-radius: 2px; display: flex; align-items: center; justify-content: center; }
.r-s { color: #323130; margin-bottom: 0; }
.r-fill { flex: 1; }
.r-g { margin-bottom: 20px; color: #323130; }
.r-b { margin-bottom: 10px; }

.tree { width: 253px; border-right: 1px solid #dcdcdc; font-size: 10.500px; color: #605e5c; }
.tree-top { height: 40px; display: flex; align-items: center; justify-content: space-between; padding: 5px 17px 0 15px; }
.tree-top h2 { margin: 0; font-size: 14.500px; font-weight: 600; color: #3b3a39; }
.tree-top svg { color: #605e5c; }
.tree-tabs { height: 25px; border-bottom: 1px solid #d2d0ce; display: flex; gap: 17px; padding: 6px 0 0 15px; font-size: 12.500px; letter-spacing: -.3px; }
.tree-tabs .on { height: 19px; border-bottom: 2px solid #742774; color: #323130; }
.tree-search { margin: 8px 14px 0; height: 27px; border: 1px solid #605e5c; border-radius: 2px; background: #fff; display: flex; align-items: center; gap: 7px; padding-left: 11px; color: #605e5c; }
.tree-search svg { color: #8f5a9c; }
.tree-new { height: 29px; border-bottom: 1px solid #d2d0ce; display: flex; align-items: center; padding-left: 17px; gap: 6px; color: #605e5c; }
.tree-new .i16 { color: #b98ab9; }
.tree-new .i12 { color: #8a8886; margin-left: 1px; }
.tree-app { height: 29px; border-bottom: 1px solid #d2d0ce; display: flex; align-items: center; padding-left: 21px; gap: 6px; }
.row { height: 29px; display: flex; align-items: center; padding-left: 6px; gap: 6px; }
.rc { color: #8a8886; margin-right: -1px; }
.row .scr { width: 14px; }
.scr { width: 15px; height: 12px; }
.row-on { background: #dcdcdc; }
.row em { margin-left: auto; margin-right: 20px; font-weight: 700; font-size: 14px; letter-spacing: .5px; color: #323130; }

.stage { width: 780px; display: flex; flex-direction: column; background: #dfdfdf; }
.stage-area { flex: 1; padding: 52px 0 0 77px; }
.canvas { width: 612px; height: 345px; background: #f0f0f0; padding: 1px 2px 0 0; box-shadow: -1px 0 0 #eee; }
.app-head { height: 25px; width: 610px; background: linear-gradient(90deg, #c8102e, #250a3a); display: flex; align-items: center; justify-content: space-between; padding: 0 15px 0 12px; position: relative; }
.back-i { width: 17px; height: 17px; }
.home-i { width: 18px; height: 18px; }
.app-title { position: absolute; left: 270px; font-size: 18px; font-weight: 700; color: #f2f2f2; line-height: 25px; }
.app-body { width: 610px; height: 318px; background: linear-gradient(94deg, #000048, #1cb5e0); position: relative; overflow: hidden; padding: 25px 0 0 34px; }
.form { display: grid; grid-template-columns: 156px 157px 156px; column-gap: 26px; row-gap: 5px; align-items: start; margin-bottom: 14px; }
.f label { display: block; height: 17px; padding-left: 2px; font-size: 8px; font-weight: 600; letter-spacing: -.1px; line-height: 13px; color: #fff; white-space: nowrap; }
.f:nth-child(3n+2) label { padding-left: 3px; }
.f:nth-child(3n) label { padding-left: 3px; }
.in { height: 18px; background: #fff; font-size: 8.500px; letter-spacing: -.35px; line-height: 15px; color: #4d5468; white-space: nowrap; border: 1px solid rgba(160,175,210,.8); }
.in-att { height: 36px; padding: 1px 0 0 5px; color: #4a4f63; line-height: 17px; letter-spacing: -.2px; }
.status-t { margin: -8px 0 0 2px; font-size: 9px; font-weight: 700; color: #fff; line-height: 17px; }
.status-b { width: 243px; height: 10px; margin-top: 2px; background: #fff; }
.sbar { position: absolute; right: -2px; top: 20px; width: 8px; height: 298px; background: #ececec; display: flex; flex-direction: column; }
.sb-up, .sb-dn { height: 9px; position: relative; }
.sb-up::after, .sb-dn::after { content: ""; position: absolute; left: 2px; top: 3px; border: 2px solid transparent; }
.sb-up::after { border-bottom-color: #8a8a8a; top: 1px; }
.sb-dn::after { border-top-color: #505050; top: 4px; }
.sb-th { height: 156px; background: #bdbdbd; margin: 0 1px; }
.sb-dn { margin-top: auto; }

.stage-foot { height: 35px; background: #f0f0f0; border-top: 1px solid #d8d6d4; display: flex; align-items: center; padding-left: 14px; font-size: 10.500px; color: #605e5c; }
.sf-n { margin-left: 7px; }
.sf-c { margin-left: 7px; color: #8a8886; }
.sf-fill { flex: 1; }
.sf-m { margin-right: 9px; }
.slider { width: 145px; height: 2px; background: #605e5c; position: relative; }
.thumb { position: absolute; left: 36px; top: -6px; width: 2px; height: 14px; background: #3b3a39; box-shadow: 0 0 0 1px #fff; }
.tick { position: absolute; left: 58px; top: -3px; width: 1px; height: 8px; background: #3b3a39; }
.sf-p { margin-left: 10px; }
.sf-z { margin-left: 19px; font-size: 9px; }
.sf-pc { margin-left: 8px; font-size: 9px; }
.sf-e { margin: 0 19px 0 21px; }

.props { flex: 1; border-left: 2px solid #d2d0ce; font-size: 10.500px; letter-spacing: -.1px; color: #605e5c; }
.p-top { height: 36px; display: flex; align-items: center; padding: 10px 13px 0 10px; font-size: 9.500px; }
.p-help { width: 14px; height: 14px; margin-left: 8px; border: 1px solid #605e5c; border-radius: 50%; text-align: center; font-size: 9px; line-height: 12px; }
.p-arrow { width: 16px; height: 16px; margin-left: auto; color: #605e5c; }
.p-name { height: 22px; padding-left: 9px; font-size: 12.500px; line-height: 22px; color: #444; }
.p-tabs { height: 30px; border-bottom: 1px solid #d2d0ce; display: flex; gap: 25px; padding: 10px 0 0 7px; font-size: 9.500px; }
.p-tabs .on { height: 20px; border-bottom: 2px solid #742774; font-weight: 700; letter-spacing: -.3px; color: #3b3a39; }
.p-row { display: flex; align-items: center; justify-content: space-between; height: 21px; margin: 0 10px 7px 10px; }
.p-row-fill { height: 23px; margin-top: 13px; margin-bottom: 6px; }
.p-fill { width: 41px; height: 23px; background: #fff; border: 1px solid #c8c6c4; display: flex; flex-direction: column; align-items: center; padding-top: 2px; }
.p-fill i { width: 21px; height: 4px; margin-top: 2px; background: #e8e8e8; }
.p-sel { width: 131px; height: 21px; background: #fff; border: 1px solid #c8c6c4; display: flex; align-items: center; padding: 0 3px; font-size: 11px; color: #3b3a39; }
.p-sel .i12 { margin-left: auto; color: #323130; }
.pic { width: 12px; height: 9px; margin: 0 5px 0 0; }

/* taskbar */
.task { height: 48px; background: linear-gradient(90deg, #ecd9dd, #e6d6e6 20%, #e9d8de 35%, #e1d8e4 60%, #dbd9e8); border-top: 1px solid #b8b4b8; display: flex; align-items: center; font-size: 11px; color: #1a1a1a; }
.t-win { width: 24px; height: 24px; margin-left: 508px; }
.t-search { width: 96px; height: 30px; margin-left: 15px; border-radius: 15px; background: #f7f2f1; display: flex; align-items: center; gap: 8px; padding-left: 22px; }
.t-app { width: 40px; height: 40px; margin-left: 4px; display: flex; align-items: center; justify-content: center; position: relative; }
.t-search + .t-app { margin-left: 8px; }
.t-chrome b { position: absolute; left: 22px; top: 0; width: 18px; height: 18px; border-radius: 50%; background: #e3224e; color: #fff; font-size: 8.500px; font-weight: 400; line-height: 18px; text-align: center; }
.t-run { position: absolute; bottom: -3px; left: 18px; width: 4px; height: 4px; border-radius: 50%; background: #6d6d6d; }
.t-edge { background: #f3f1f5; border-radius: 4px; }
.t-edge .i24 { margin-top: -4px; }
.t-act { position: absolute; left: 12px; bottom: 1px; width: 16px; height: 3px; border-radius: 2px; background: #0067c0; }
.t-up { margin-left: 239px; }
.t-lang { width: 40px; margin-left: 9px; display: flex; flex-direction: column; align-items: center; line-height: 16px; }
.t-wifi { margin-left: 10px; }
.t-vol { margin-left: 6px; }
.t-bat { margin-left: 9px; }
.t-clock { width: 79px; font-size: 11.500px; display: flex; flex-direction: column; align-items: flex-end; line-height: 16px; }
.t-badge { width: 15px; height: 15px; margin-left: 12px; border-radius: 50%; background: #0067c0; color: #fff; font-size: 9px; line-height: 15px; text-align: center; }
```
